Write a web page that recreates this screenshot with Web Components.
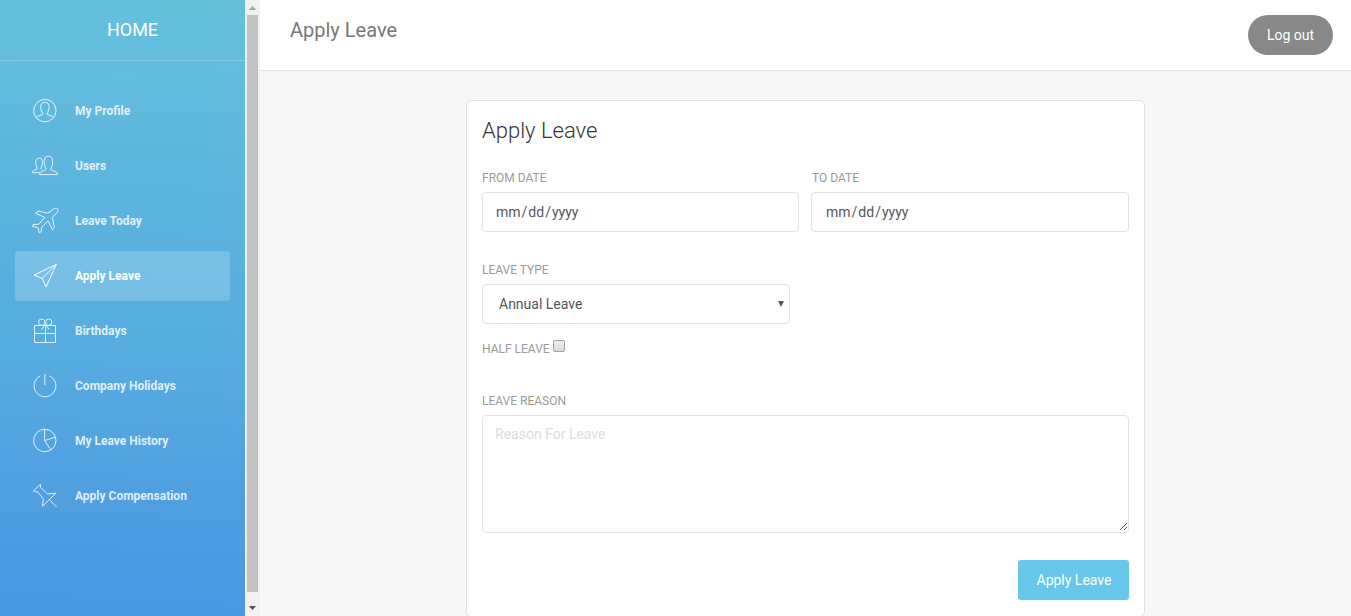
<!DOCTYPE html>
<html lang="en">
<head>
<meta charset="utf-8">
<title>Apply Leave</title>
<style>
html,body{margin:0;height:100%;overflow:hidden}
body{font-family:Roboto,"Liberation Sans",sans-serif;font-size:14px;background:#f7f7f7}
</style>
</head>
<body>
<leave-app></leave-app>
<script>
const ICONS = {
  profile: '<circle cx="14.9" cy="14.6" r="11.2"/><path d="M6.200 21.300c1.300-1.500 3.800-1.800 5.600-2.300 1-.4.9-1.700.4-2.600-1.200-2-1.500-3.500-1.500-5.700 0-2.800 1.300-4.300 4.200-4.300s4.200 1.500 4.200 4.300c0 2.200-.4 3.700-1.500 5.700-.5.9-.6 2.200.4 2.600 1.800.5 4.200.8 5.500 2.300"/>',
  users: '<path d="M9.700 23.600c-.2-3 2-3.300 4.700-4.100 2.200-.6 1.700-2 .9-3.300-1-1.900-1.200-3.600-1.200-6 0-3.200 1.500-5 4.300-5s4.300 1.800 4.300 5c0 2.400-.2 4.100-1.200 6-.8 1.300-1.200 2.700.9 3.300 2.700.8 5.100 1.100 4.900 4.100z"/><path d="M9.900 21.700H2.500c-.2-2.300 1.500-2.500 3.400-3 1.800-.5 1.600-1.600 1-2.600-.9-1.500-1.200-2.900-1.200-4.900 0-2.600 1.300-4 3.400-4 2.200 0 3.300 1.400 3.300 4 0 2-.3 3.400-1.200 4.900-.5 1-.7 2 .7 2.500"/>',
  plane: '<path d="M27.500 2.700c-1.200-.7-2.700-.5-3.800.2L18 7.200 8 5.100 5.700 7.300l9 4.100L9 18.200l-5.800.3-.6 1.800L8 21.700l1.300 5 1.800-.9.600-4.500 6.300-6.500 4.500 8.900 1.800-2-1.900-10.400 4.800-5c.8-1 .9-2.300.3-3.600z"/>',
  send: '<path d="M26.300 3.300 4 14.200l8.200 3.100 3.900 8.600zM12.200 17.300 26.300 3.300"/>',
  gift: '<path d="M4.500 9.500h21v17h-21zM4.500 17.500h21M15.500 9.500v17M15.400 8.500l-3.800 5M15.400 8.500l3.800 5"/><circle cx="11.800" cy="6.200" r="3.200"/><circle cx="18.700" cy="6.200" r="3.200"/>',
  power: '<path d="M10.500 4.900a10.900 10.900 0 1 0 9 0M14.900 3v11"/>',
  pie: '<circle cx="14.800" cy="14.500" r="11.200"/><path d="M14.600 3.300v11.300l10.800-3.400M14.600 14.600l6.200 9.200"/>',
  pin: '<path d="M10.300 3.300 3.300 10l4.800 1.300 5.200 6.600-.8 7.300L25.900 12.300l-8.400.6-6.900-6.200zM19.300 18.700l7.300 7.300"/>'
};

const define = (name, markup, setup) => {
  const template = document.createElement('template');
  template.innerHTML = markup;
  customElements.define(name, class extends HTMLElement {
    constructor() {
      super();
      this.attachShadow({ mode: 'open' }).append(template.content.cloneNode(true));
    }
    connectedCallback() { if (setup) setup(this.shadowRoot, this); }
  });
};

define('nav-item', `
<style>
:host{display:flex;align-items:center;height:50px;margin:5px 15px 0;padding-left:15px;box-sizing:border-box;border-radius:4px;color:rgba(255,255,255,.84);font-size:12px;font-weight:700}
:host([active]){background:rgba(255,255,255,.19);color:#fff}
svg{flex:none;width:30px;height:30px;margin-right:15px;fill:none;stroke:currentColor;stroke-width:1;stroke-linejoin:round}
</style>
<svg viewBox="0 0 30 30"></svg><slot></slot>`,
(root, host) => { root.querySelector('svg').innerHTML = ICONS[host.getAttribute('icon')]; });

define('side-bar', `
<style>
:host{display:block;width:245px;height:616px;flex:none;overflow:hidden;background:linear-gradient(183deg,#65c1da 0%,#60bbdd 15%,#5bb3de 35%,#56ace1 57%,#509fe0 80%,#4998e2 100%)}
header{height:58px;padding:0 0 2px 20px;border-bottom:1px solid rgba(255,255,255,.25);display:flex;align-items:center;justify-content:center;color:#fff;font-size:18px;width:225px}
nav{padding-top:20px}
</style>
<header>HOME</header>
<nav><slot></slot></nav>`);

define('scroll-rail', `
<style>
:host{display:flex;flex-direction:column;flex:none;width:15px;height:616px;background:#f1f1f1}
svg{display:block;width:15px;height:15px}
i{display:block;width:11px;height:577px;margin-left:2px;background:#c1c1c1}
.down{margin-top:9px}
</style>
<svg viewBox="0 0 15 15"><path d="M4 10h7L7.500 6z" fill="#a3a3a3"/></svg><i></i>
<svg class="down" viewBox="0 0 15 15"><path d="M4 5h7L7.500 9z" fill="#505050"/></svg>`);

define('page-header', `
<style>
:host{display:flex;justify-content:space-between;align-items:flex-start;box-sizing:border-box;height:71px;padding:15px 18px 0 30px;background:#fff;border-bottom:1px solid #e5e5e5}
h1{margin:0;font-size:20px;font-weight:400;line-height:30px;color:#777}
button{width:85px;height:40px;padding:0;border:0;border-radius:20px;background:#888;color:#fff;font:400 14px Roboto,sans-serif}
</style>
<h1><slot></slot></h1><button>Log out</button>`);

define('form-field', `
<style>
:host{display:block}
label{display:block;height:20px;line-height:20px;margin-bottom:4px;font-size:12px;color:#9a9a9a;text-transform:uppercase}
:host(.to) label{padding-left:1px}
</style>
<label></label><slot></slot>`,
(root, host) => { root.querySelector('label').textContent = host.getAttribute('label'); });

define('input-box', `
<style>
:host{display:flex;align-items:center;box-sizing:border-box;height:40px;padding:0 13px;border:1px solid #e3e3e3;border-radius:4px;background:#fff;color:#565656;font-size:14px}
:host([kind=select]){width:308px;padding:0 5px 0 16px;justify-content:space-between}
:host([kind=area]){height:118px;padding:8px 12px;align-items:flex-start;color:#ddd;line-height:20px;position:relative}
svg{display:none}
:host([kind=select]) .arrow{display:block;width:6px;height:6px}
:host([kind=area]) .grip{display:block;position:absolute;right:1px;bottom:1px;width:8px;height:8px}
</style>
<slot></slot>
<svg class="arrow" viewBox="0 0 6 6"><path d="M0 0h6L3 6z" fill="#555"/></svg>
<svg class="grip" viewBox="0 0 8 8" shape-rendering="crispEdges"><path d="M.5 7.500l7-7M4.500 7.500l3-3" stroke="#555" fill="none"/></svg>`);

define('leave-form', `
<style>
:host{display:block;box-sizing:border-box;width:679px;height:517px;margin:29px auto 0 206px;padding:14px 15px 0;background:#fff;border:1px solid #e0e0e0;border-radius:5px}
h2{margin:0 0 22px;font-size:22px;font-weight:300;line-height:31px;color:#333}
.dates{display:grid;grid-template-columns:317px 318px;gap:12px;margin-bottom:28px}
.date span{padding:0 1px}
.to .date{padding-left:14px}
.half{display:flex;margin-top:15px;height:20px;line-height:21px;font-size:12px;color:#9a9a9a;gap:3px}
.check{box-sizing:border-box;width:12px;height:12px;margin-top:1px;border:1px solid #a2a2a2;border-radius:2px;background:linear-gradient(#ededed,#dcdcdc)}
.reason{margin-top:32px}
.actions{display:flex;justify-content:flex-end;margin-top:27px}
button{width:111px;height:40px;padding:0 0 0 1px;border:0;border-radius:3px;background:#66c7ea;color:#fff;font:400 14px Roboto,sans-serif}
</style>
<h2>Apply Leave</h2>
<div class="dates">
<form-field label="From date"><input-box class="date">mm<span>/</span>dd<span>/</span>yyyy</input-box></form-field>
<form-field class="to" label="To date"><input-box class="date">mm<span>/</span>dd<span>/</span>yyyy</input-box></form-field>
</div>
<form-field label="Leave type"><input-box kind="select">Annual Leave</input-box></form-field>
<div class="half"><span>HALF LEAVE</span><span class="check"></span></div>
<form-field class="reason" label="Leave reason"><input-box kind="area">Reason For Leave</input-box></form-field>
<div class="actions"><button>Apply Leave</button></div>`);

define('leave-app', `
<style>
:host{display:flex;width:1351px;height:616px;overflow:hidden}
main{flex:1;min-width:0;background:#f7f7f7}
</style>
<side-bar>
<nav-item icon="profile">My Profile</nav-item>
<nav-item icon="users">Users</nav-item>
<nav-item icon="plane">Leave Today</nav-item>
<nav-item icon="send" active>Apply Leave</nav-item>
<nav-item icon="gift">Birthdays</nav-item>
<nav-item icon="power">Company Holidays</nav-item>
<nav-item icon="pie">My Leave History</nav-item>
<nav-item icon="pin">Apply Compensation</nav-item>
</side-bar>
<scroll-rail></scroll-rail>
<main>
<page-header>Apply Leave</page-header>
<leave-form></leave-form>
</main>`);
</script>
</body>
</html>
